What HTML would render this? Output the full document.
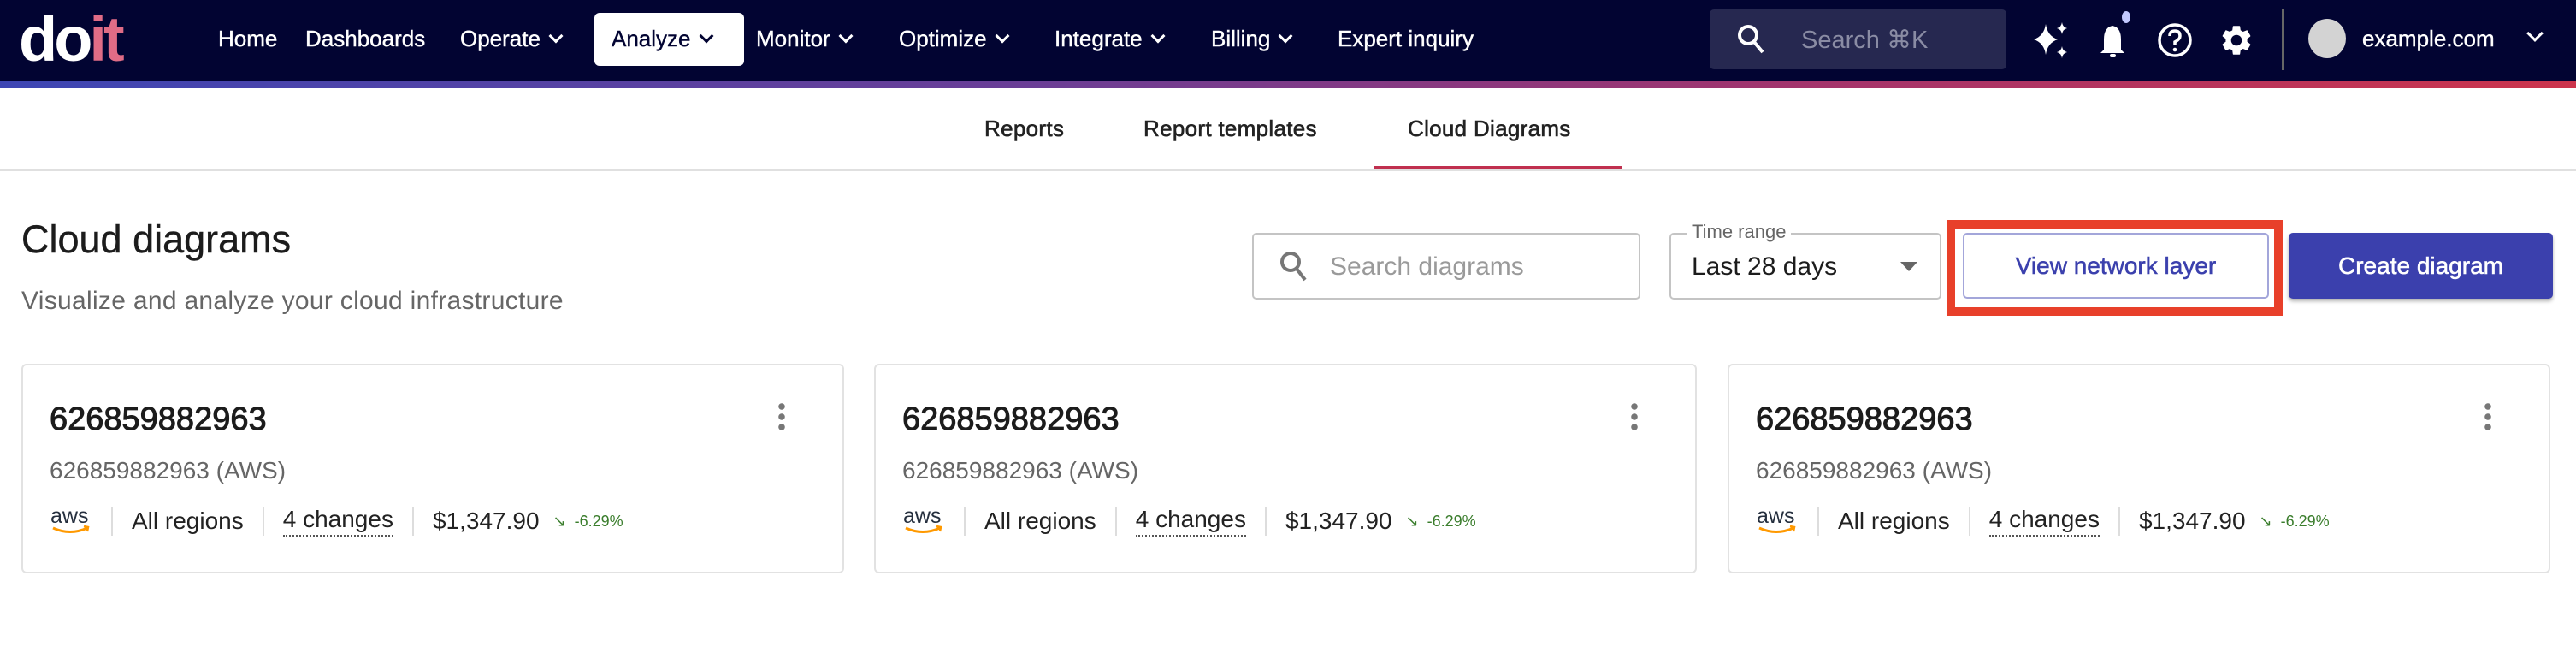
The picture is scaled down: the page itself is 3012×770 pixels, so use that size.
<!DOCTYPE html>
<html><head><meta charset="utf-8"><style>
*{margin:0;padding:0;box-sizing:border-box}
body{width:3012px;height:770px;background:#fff;font-family:"Liberation Sans",sans-serif;position:relative;overflow:hidden;color:#222}
.a{position:absolute;white-space:nowrap}
.nav{left:0;top:0;width:3012px;height:95px;background:#020432}
.grad{left:0;top:95px;width:3012px;height:8px;background:linear-gradient(90deg,#3d46b4,#6a3e96 40%,#a3346c 70%,#cc344c)}
.ni{color:#fff;font-size:26px;top:30px;-webkit-text-stroke:0.4px #fff}
.chev{display:inline-block;width:12px;height:12px;border-right:3px solid currentColor;border-bottom:3px solid currentColor;transform:rotate(45deg);margin-left:12px;position:relative;top:-6px}
.tab{font-size:26px;top:135px;color:#222;-webkit-text-stroke:0.6px #222;letter-spacing:0.3px}
.card{position:absolute;top:425px;width:962px;height:245px;border:2px solid #e2e2e2;border-radius:6px;background:#fff}
.ct{left:31px;top:42px;font-size:38px;color:#1c1c1c;-webkit-text-stroke:1px #1c1c1c}
.cs{left:31px;top:107px;font-size:28px;color:#666}
.row{left:31px;top:162px;font-size:28px;color:#222;display:flex;align-items:center}
.sep{width:2px;height:34px;background:#ddd;margin:0 22px}
</style></head><body>
<div class="a nav"></div>
<div class="a grad"></div>
<div class="a" style="left:22px;top:4px;font-size:74px;font-weight:bold;letter-spacing:-4px;line-height:84px"><span style="color:#fff">do</span><span style="color:#e06c86">it</span></div>
<div class="a ni" style="left:255px">Home</div>
<div class="a ni" style="left:357px">Dashboards</div>
<div class="a ni" style="left:538px">Operate<span class="chev"></span></div>
<div class="a" style="left:695px;top:15px;width:175px;height:62px;background:#fff;border-radius:6px"></div>
<div class="a ni" style="left:715px;color:#020432;-webkit-text-stroke:0.4px #020432">Analyze<span class="chev"></span></div>
<div class="a ni" style="left:884px">Monitor<span class="chev"></span></div>
<div class="a ni" style="left:1051px">Optimize<span class="chev"></span></div>
<div class="a ni" style="left:1233px">Integrate<span class="chev"></span></div>
<div class="a ni" style="left:1416px">Billing<span class="chev"></span></div>
<div class="a ni" style="left:1564px">Expert inquiry</div>
<div class="a" style="left:1999px;top:11px;width:347px;height:70px;background:#262850;border-radius:5px"></div>
<svg class="a" style="left:2030px;top:27px" width="36" height="38" viewBox="0 0 36 38"><circle cx="14" cy="14" r="10" stroke="#fff" stroke-width="4" fill="none"/><path d="M21 22l10 12" stroke="#fff" stroke-width="4"/></svg>
<div class="a" style="left:2106px;top:29px;font-size:29px;color:#8a8ca4">Search ⌘K</div>
<svg class="a" style="left:2376px;top:24px" width="44" height="46" viewBox="0 0 44 46"><path d="M16 4 Q18 18 30 22 Q18 26 16 40 Q14 26 2 22 Q14 18 16 4Z" fill="#fff"/><path d="M35 2 Q36 8 41 9 Q36 10 35 16 Q34 10 29 9 Q34 8 35 2Z" fill="#fff"/><path d="M35 30 Q36 36 41 37 Q36 38 35 44 Q34 38 29 37 Q34 36 35 30Z" fill="#fff"/></svg>
<svg class="a" style="left:2452px;top:12px" width="40" height="56" viewBox="0 0 40 56"><path d="M18 18 Q8 20 8 34 L8 46 L4 50 L32 50 L28 46 L28 34 Q28 20 18 18Z" fill="#fff"/><rect x="15" y="51" width="7" height="4" rx="2" fill="#fff"/><ellipse cx="34" cy="8" rx="5" ry="7" fill="#c3c9ff"/></svg>
<svg class="a" style="left:2522px;top:26px" width="42" height="42" viewBox="0 0 42 42"><circle cx="21" cy="21" r="18" stroke="#fff" stroke-width="3.5" fill="none"/><path d="M15 16 Q15 10 21 10 Q27 10 27 16 Q27 20 21 23 L21 27" stroke="#fff" stroke-width="3.5" fill="none"/><circle cx="21" cy="32" r="2.3" fill="#fff"/></svg>
<svg class="a" style="left:2594px;top:26px" width="42" height="42" viewBox="0 0 24 24"><path fill="#fff" d="M19.14 12.94c.04-.3.06-.61.06-.94 0-.32-.02-.64-.07-.94l2.030-1.58a.49.49 0 0 0 .12-.61l-1.92-3.32a.49.49 0 0 0-.59-.22l-2.39.96c-.5-.38-1.03-.7-1.62-.94l-.36-2.54a.48.48 0 0 0-.48-.41h-3.84c-.24 0-.43.17-.47.41l-.36 2.54c-.59.24-1.13.57-1.62.94l-2.39-.96a.49.49 0 0 0-.59.22L2.74 8.87c-.12.21-.08.47.12.61l2.03 1.58c-.05.3-.09.63-.09.94s.02.64.07.94l-2.03 1.58a.49.49 0 0 0-.12.61l1.92 3.32c.12.22.37.29.59.22l2.39-.96c.5.38 1.03.7 1.62.94l.36 2.54c.05.24.24.41.48.41h3.84c.24 0 .44-.17.47-.41l.36-2.54c.59-.24 1.13-.56 1.62-.94l2.39.96c.22.08.47 0 .59-.22l1.92-3.32c.12-.22.07-.47-.12-.61l-2.01-1.58zM12 15.6A3.6 3.6 0 1 1 12 8.4a3.6 3.6 0 0 1 0 7.2z"/></svg>
<div class="a" style="left:2668px;top:10px;width:2px;height:72px;background:#666"></div>
<div class="a" style="left:2699px;top:22px;width:44px;height:46px;border-radius:50%;background:#d3d3d3"></div>
<div class="a ni" style="left:2762px">example.com</div>
<div class="a" style="left:2957px;top:38px;color:#fff"><span class="chev" style="width:14px;height:14px;margin-left:0"></span></div>
<div class="a tab" style="left:1151px">Reports</div>
<div class="a tab" style="left:1337px">Report templates</div>
<div class="a tab" style="left:1646px">Cloud Diagrams</div>
<div class="a" style="left:0;top:198px;width:3012px;height:2px;background:#e0e0e0"></div>
<div class="a" style="left:1606px;top:194px;width:290px;height:4px;background:#c0304f"></div>
<div class="a" style="left:25px;top:254px;font-size:45px;color:#1c1c1c;-webkit-text-stroke:0.4px #1c1c1c">Cloud diagrams</div>
<div class="a" style="left:25px;top:335px;font-size:30px;color:#666;letter-spacing:0.3px">Visualize and analyze your cloud infrastructure</div>
<div class="a" style="left:1464px;top:272px;width:454px;height:78px;border:2px solid #c4c4c4;border-radius:5px"></div>
<svg class="a" style="left:1495px;top:292px" width="36" height="40" viewBox="0 0 36 40"><circle cx="14" cy="14" r="10" stroke="#777" stroke-width="4" fill="none"/><path d="M21 22l10 13" stroke="#777" stroke-width="4"/></svg>
<div class="a" style="left:1555px;top:295px;font-size:30px;color:#9a9a9a">Search diagrams</div>
<div class="a" style="left:1952px;top:272px;width:318px;height:78px;border:2px solid #c4c4c4;border-radius:5px"></div>
<div class="a" style="left:1972px;top:258px;background:#fff;padding:0 6px;font-size:22px;color:#666">Time range</div>
<div class="a" style="left:1978px;top:295px;font-size:30px;color:#1c1c1c">Last 28 days</div>
<div class="a" style="left:2222px;top:306px;width:0;height:0;border-left:10px solid transparent;border-right:10px solid transparent;border-top:11px solid #666"></div>
<div class="a" style="left:2276px;top:257px;width:393px;height:112px;border:10px solid #e8402a"></div>
<div class="a" style="left:2295px;top:272px;width:358px;height:77px;border:2px solid #a3a6da;border-radius:5px;color:#3b40ad;font-size:28px;text-align:center;line-height:73px;-webkit-text-stroke:0.5px #3b40ad">View network layer</div>
<div class="a" style="left:2676px;top:272px;width:309px;height:77px;background:#3b40ad;border-radius:5px;color:#fff;font-size:28px;text-align:center;line-height:77px;box-shadow:0 3px 4px rgba(0,0,0,.3);-webkit-text-stroke:0.5px #fff">Create diagram</div>
<div class="card" style="left:25px">
<div class="a ct">626859882963</div>
<div class="a" style="left:883px;top:42px;width:8px;height:36px;background:radial-gradient(circle,#777 3.5px,transparent 4px) 0 0/8px 12px"></div>
<div class="a cs">626859882963 (AWS)</div>
<div class="a row"><svg width="50" height="40" viewBox="0 0 50 40"><text x="1" y="22" font-family="Liberation Sans" font-size="25" fill="#252f3e">aws</text><path d="M4 28 Q24 37 44 28" stroke="#f90" stroke-width="3" fill="none"/><path d="M40 26 L45 27 L44 32" stroke="#f90" stroke-width="2.5" fill="none"/></svg><span class="sep"></span>All regions<span class="sep"></span><span style="border-bottom:2px dotted #555;padding-bottom:2px">4 changes</span><span class="sep"></span>$1,347.90<span style="color:#3a7d2c;font-size:18px;margin-left:16px">↘&nbsp;&nbsp;-6.29%</span></div>
</div>
<div class="card" style="left:1022px">
<div class="a ct">626859882963</div>
<div class="a" style="left:883px;top:42px;width:8px;height:36px;background:radial-gradient(circle,#777 3.5px,transparent 4px) 0 0/8px 12px"></div>
<div class="a cs">626859882963 (AWS)</div>
<div class="a row"><svg width="50" height="40" viewBox="0 0 50 40"><text x="1" y="22" font-family="Liberation Sans" font-size="25" fill="#252f3e">aws</text><path d="M4 28 Q24 37 44 28" stroke="#f90" stroke-width="3" fill="none"/><path d="M40 26 L45 27 L44 32" stroke="#f90" stroke-width="2.5" fill="none"/></svg><span class="sep"></span>All regions<span class="sep"></span><span style="border-bottom:2px dotted #555;padding-bottom:2px">4 changes</span><span class="sep"></span>$1,347.90<span style="color:#3a7d2c;font-size:18px;margin-left:16px">↘&nbsp;&nbsp;-6.29%</span></div>
</div>
<div class="card" style="left:2020px">
<div class="a ct">626859882963</div>
<div class="a" style="left:883px;top:42px;width:8px;height:36px;background:radial-gradient(circle,#777 3.5px,transparent 4px) 0 0/8px 12px"></div>
<div class="a cs">626859882963 (AWS)</div>
<div class="a row"><svg width="50" height="40" viewBox="0 0 50 40"><text x="1" y="22" font-family="Liberation Sans" font-size="25" fill="#252f3e">aws</text><path d="M4 28 Q24 37 44 28" stroke="#f90" stroke-width="3" fill="none"/><path d="M40 26 L45 27 L44 32" stroke="#f90" stroke-width="2.5" fill="none"/></svg><span class="sep"></span>All regions<span class="sep"></span><span style="border-bottom:2px dotted #555;padding-bottom:2px">4 changes</span><span class="sep"></span>$1,347.90<span style="color:#3a7d2c;font-size:18px;margin-left:16px">↘&nbsp;&nbsp;-6.29%</span></div>
</div>
</body></html>
